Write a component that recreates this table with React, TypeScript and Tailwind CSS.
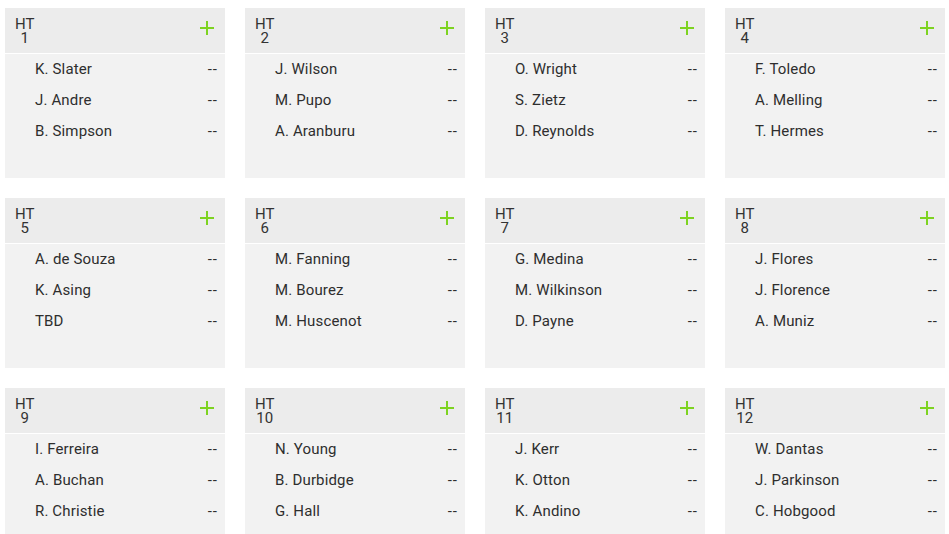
const heats: string[][] = [
  ['K. Slater', 'J. Andre', 'B. Simpson'],
  ['J. Wilson', 'M. Pupo', 'A. Aranburu'],
  ['O. Wright', 'S. Zietz', 'D. Reynolds'],
  ['F. Toledo', 'A. Melling', 'T. Hermes'],
  ['A. de Souza', 'K. Asing', 'TBD'],
  ['M. Fanning', 'M. Bourez', 'M. Huscenot'],
  ['G. Medina', 'M. Wilkinson', 'D. Payne'],
  ['J. Flores', 'J. Florence', 'A. Muniz'],
  ['I. Ferreira', 'A. Buchan', 'R. Christie'],
  ['N. Young', 'B. Durbidge', 'G. Hall'],
  ['J. Kerr', 'K. Otton', 'K. Andino'],
  ['W. Dantas', 'J. Parkinson', 'C. Hobgood'],
];

function PlusIcon() {
  return (
    <svg width="14" height="14" viewBox="0 0 14 14" className="block">
      <rect x="0" y="6" width="14" height="2" fill="#7ed321" />
      <rect x="6" y="0" width="2" height="14" fill="#7ed321" />
    </svg>
  );
}

function HeatCard({ num, surfers }: { num: number; surfers: string[] }) {
  return (
    <div className="h-[170px] flex flex-col bg-[#f2f2f2]">
      {/* header */}
      <div className="h-[46px] shrink-0 flex items-start justify-between bg-[#ececec] border-b border-white pl-[10px] pr-[11px] pt-[9px]">
        <div className="flex flex-col items-center text-[15px] leading-[14px] text-[#333]">
          <span>HT</span>
          <span>{num}</span>
        </div>
        <div className="pt-[4px]">
          <PlusIcon />
        </div>
      </div>
      {/* surfers */}
      <div className="flex flex-col">
        {surfers.map((s) => (
          <div key={s} className="h-[31px] flex items-center justify-between pl-[30px] pr-[7px] text-[15px] text-[#2e2e2e] tracking-[0.15px]">
            <span>{s}</span>
            <span className="tracking-[1px]">--</span>
          </div>
        ))}
      </div>
    </div>
  );
}

export default function App() {
  return (
    <div className="w-[949px] h-[534px] overflow-hidden bg-white pl-[5px] pt-[8px] font-['Roboto',sans-serif]">
      <div className="grid grid-cols-[220px_220px_220px_220px] gap-x-[20px] gap-y-[20px]">
        {heats.map((h, i) => (
          <HeatCard key={i} num={i + 1} surfers={h} />
        ))}
      </div>
    </div>
  );
}
